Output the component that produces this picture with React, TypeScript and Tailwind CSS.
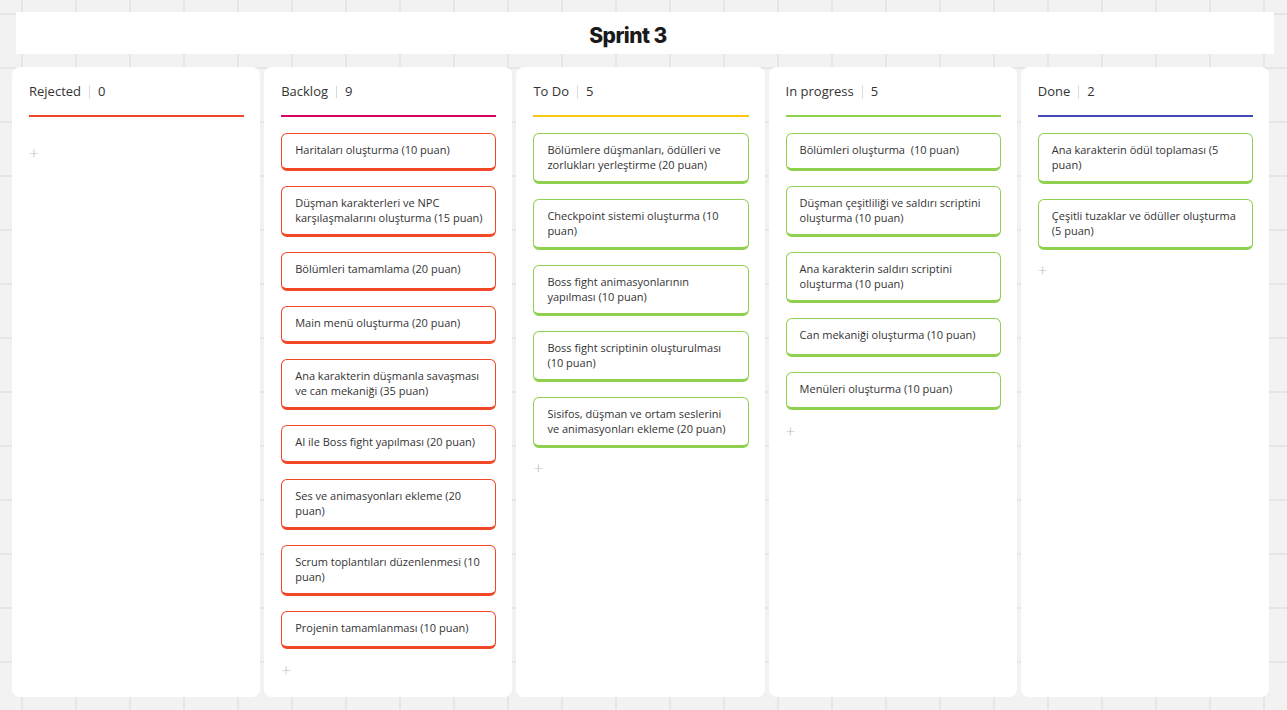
type Column = {
  title: string;
  line: string;
  cardColor: string;
  cards: string[];
};

const columns: Column[] = [
  { title: "Rejected", line: "bg-[#f24726]", cardColor: "border-[#f24726]", cards: [] },
  {
    title: "Backlog",
    line: "bg-[#da0063]",
    cardColor: "border-[#f24726]",
    cards: [
      "Haritaları oluşturma (10 puan)",
      "Düşman karakterleri ve NPC karşılaşmalarını oluşturma (15 puan)",
      "Bölümleri tamamlama (20 puan)",
      "Main menü oluşturma (20 puan)",
      "Ana karakterin düşmanla savaşması ve can mekaniği (35 puan)",
      "AI ile Boss fight yapılması (20 puan)",
      "Ses ve animasyonları ekleme (20 puan)",
      "Scrum toplantıları düzenlenmesi (10 puan)",
      "Projenin tamamlanması (10 puan)",
    ],
  },
  {
    title: "To Do",
    line: "bg-[#fac710]",
    cardColor: "border-[#8fd14f]",
    cards: [
      "Bölümlere düşmanları, ödülleri ve zorlukları yerleştirme (20 puan)",
      "Checkpoint sistemi oluşturma (10 puan)",
      "Boss fight animasyonlarının yapılması (10 puan)",
      "Boss fight scriptinin oluşturulması (10 puan)",
      "Sisifos, düşman ve ortam seslerini ve animasyonları ekleme (20 puan)",
    ],
  },
  {
    title: "In progress",
    line: "bg-[#8fd14f]",
    cardColor: "border-[#8fd14f]",
    cards: [
      "Bölümleri oluşturma\u00a0 (10 puan)",
      "Düşman çeşitliliği ve saldırı scriptini oluşturma (10 puan)",
      "Ana karakterin saldırı scriptini oluşturma (10 puan)",
      "Can mekaniği oluşturma (10 puan)",
      "Menüleri oluşturma (10 puan)",
    ],
  },
  {
    title: "Done",
    line: "bg-[#414bb2]",
    cardColor: "border-[#8fd14f]",
    cards: [
      "Ana karakterin ödül toplaması (5 puan)",
      "Çeşitli tuzaklar ve ödüller oluşturma (5 puan)",
    ],
  },
];

export default function App() {
  return (
    <div
      className="w-[1287px] h-[710px] overflow-hidden pt-3 bg-[#f2f2f2] bg-[linear-gradient(to_right,#e6e6e6_2px,transparent_2px),linear-gradient(to_bottom,#e6e6e6_2px,transparent_2px)] bg-[size:54px_54px] bg-[position:21px_13px]"
      style={{ fontFamily: '"Open Sans", "Noto Sans", sans-serif' }}
    >
      {/* Board title */}
      <div className="ml-4 w-[1258px] h-[42px] bg-white flex items-center justify-center pr-[34px] pt-[5px]">
        <h1
          className="text-[21px] font-extrabold text-[#1a1a1a] tracking-tight"
          style={{ fontFamily: 'Inter, "Noto Sans", sans-serif' }}
        >
          Sprint 3
        </h1>
      </div>

      {/* Kanban columns */}
      <div className="ml-3 mt-[13px] w-[1257px] h-[630px] grid grid-cols-5 gap-1">
        {columns.map((col) => (
          <div key={col.title} className="bg-white rounded-lg pl-[17px] pr-4 pt-4">
            <div className="flex items-center h-[18px] text-[13px] text-[#333]">
              <span>{col.title}</span>
              <span className="mx-2 w-px h-3 bg-[#d9d9d9]" />
              <span>{col.cards.length}</span>
            </div>
            <div className={`mt-[14px] h-[1.5px] ${col.line}`} />

            <div className="mt-4 flex flex-col gap-[15px]">
              {col.cards.map((text) => (
                <div
                  key={text}
                  className={`min-h-[38.5px] bg-white rounded-md border border-b-[3px] ${col.cardColor} pl-[13px] pr-3 pt-2 pb-[9px] text-[11px] leading-[15px] text-[#333]`}
                >
                  {text}
                </div>
              ))}
            </div>

            {/* Add card */}
            <div className="mt-[14px] h-3 flex items-center text-[17px] font-light text-[#bdbdbd] leading-none">
              +
            </div>
          </div>
        ))}
      </div>
    </div>
  );
}
